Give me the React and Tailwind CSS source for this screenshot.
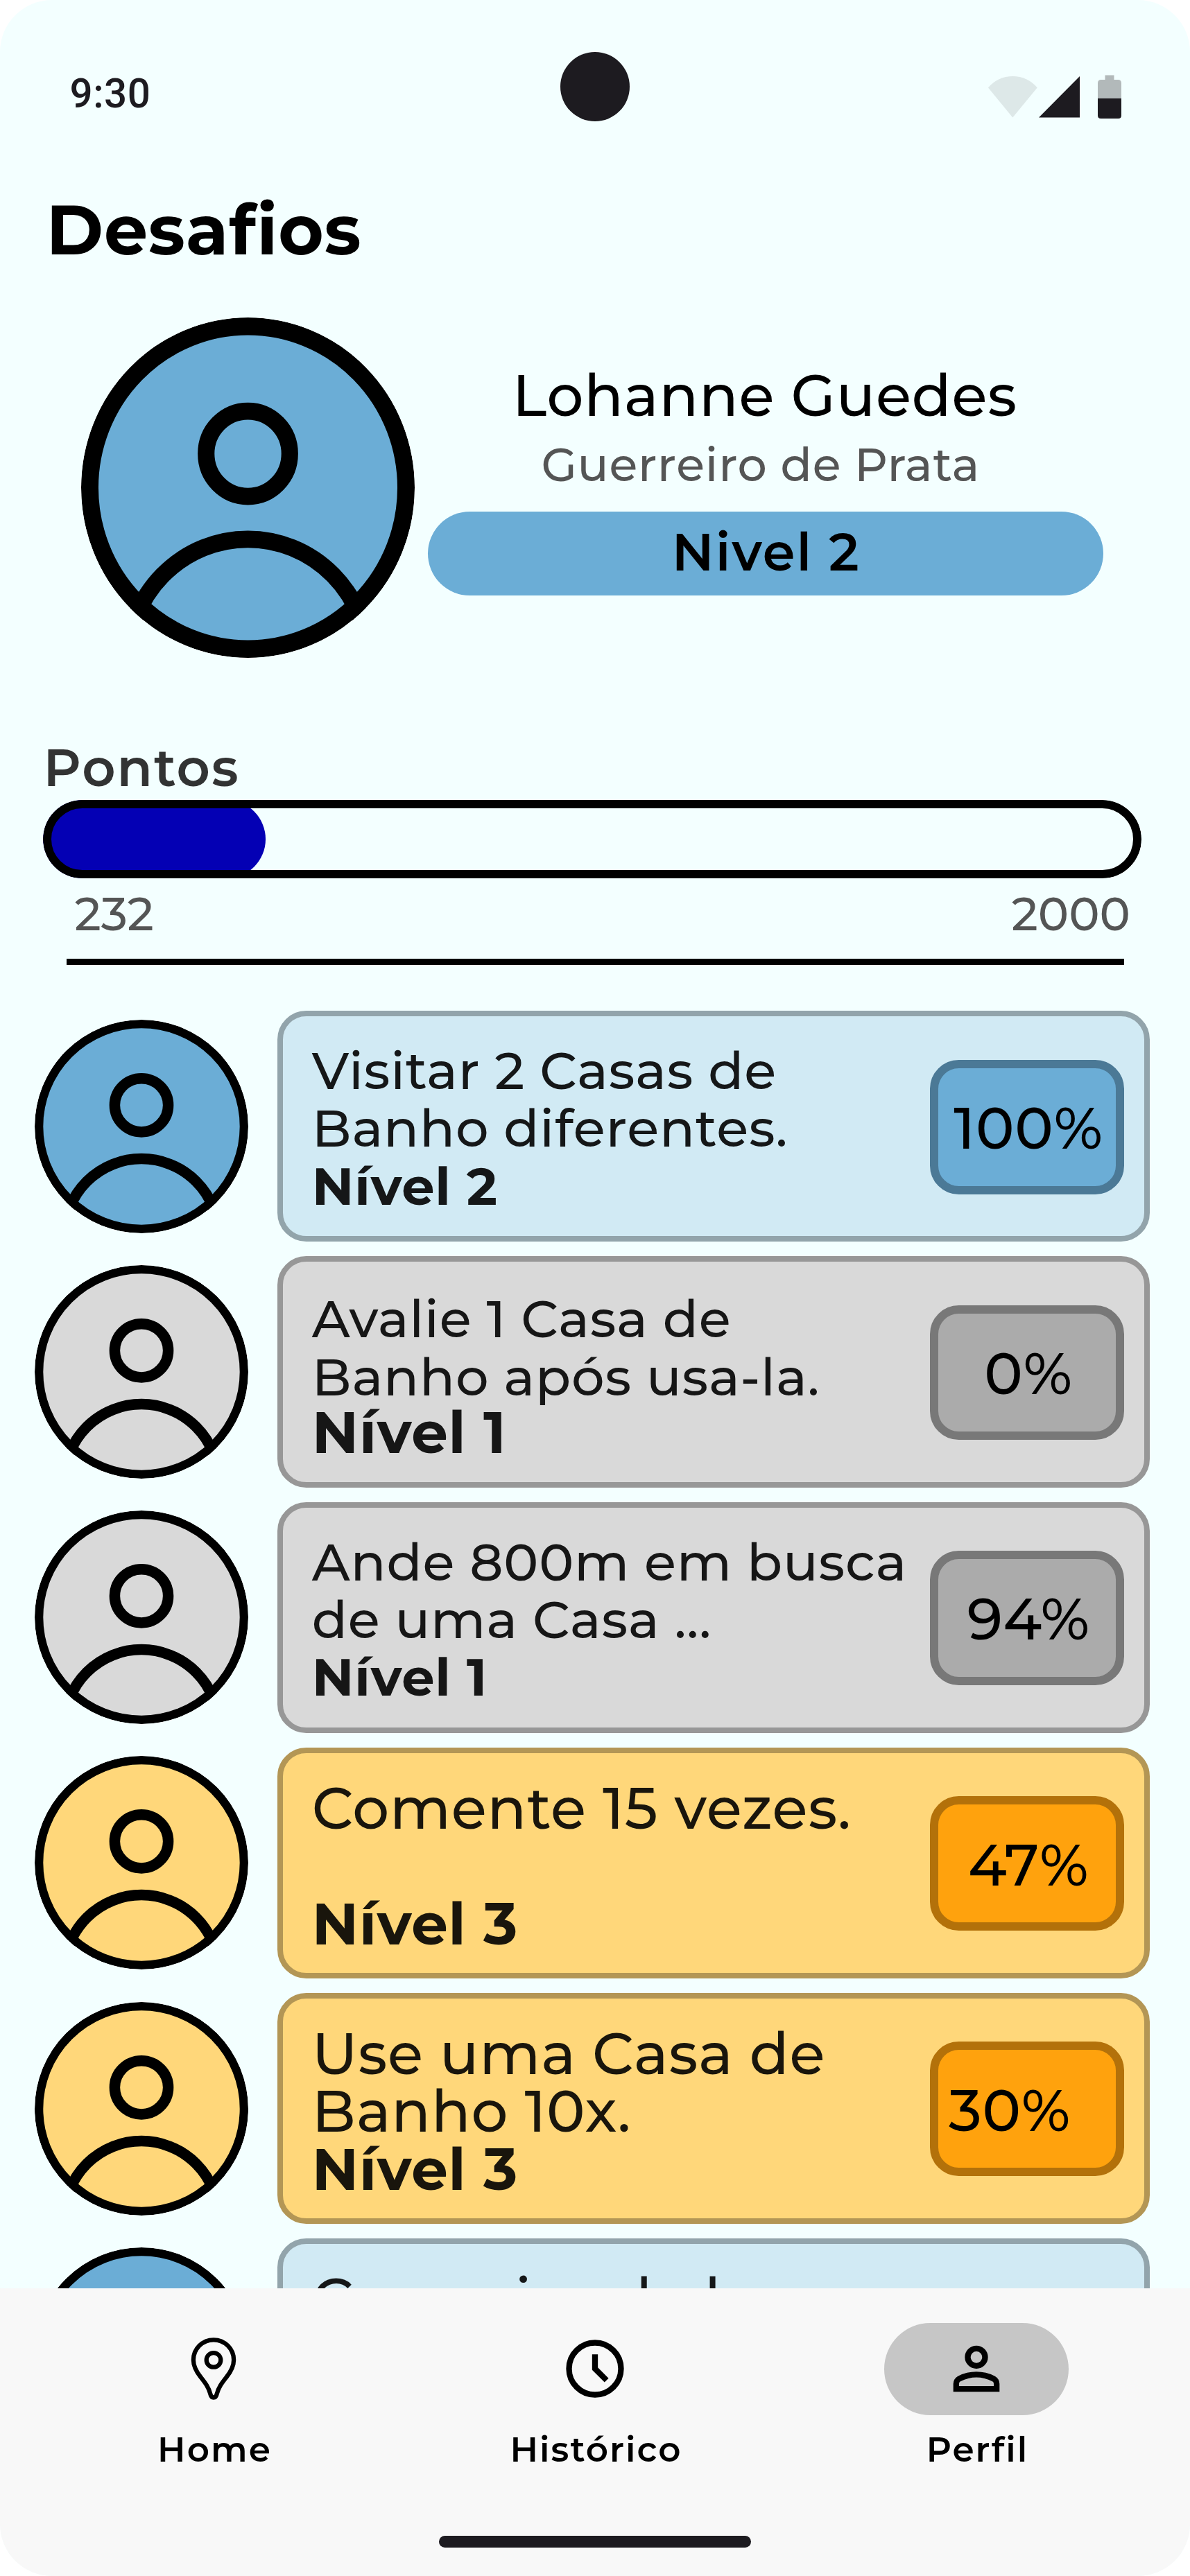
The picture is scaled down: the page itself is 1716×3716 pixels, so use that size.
import React from "react";

const THEMES = {
  blue: {
    avatar: "#6badd6",
    card: "bg-[#d1eaf4] border-[#92a4ab]",
    badge: "bg-[#6badd6] border-[#4b7996]",
  },
  gray: {
    avatar: "#d9d9d9",
    card: "bg-[#d9d9d9] border-[#979797]",
    badge: "bg-[#ababab] border-[#787878]",
  },
  gold: {
    avatar: "#ffd77a",
    card: "bg-[#ffd77a] border-[#b39655]",
    badge: "bg-[#ffa20d] border-[#b3710a]",
  },
};

const CHALLENGES = [
  {
    theme: "blue",
    lines: ["Visitar 2 Casas de", "Banho diferentes."],
    level: "Nível 2",
    percent: "100%",
    text: "pt-[37px] text-[75px]",
    levelClass: "text-[75px]",
  },
  {
    theme: "gray",
    lines: ["Avalie 1 Casa de", "Banho após usa-la."],
    level: "Nível 1",
    percent: "0%",
    text: "pt-[41px] text-[75px]",
    levelClass: "text-[83.3px] -mt-[3px]",
  },
  {
    theme: "gray",
    lines: ["Ande 800m em busca", "de uma Casa ..."],
    level: "Nível 1",
    percent: "94%",
    text: "pt-[37px] text-[75px]",
    levelClass: "text-[75px]",
  },
  {
    theme: "gold",
    lines: ["Comente 15 vezes.", "\u00a0"],
    level: "Nível 3",
    percent: "47%",
    text: "pt-[38.2px] text-[83.3px]",
    levelClass: "text-[83.3px]",
  },
  {
    theme: "gold",
    lines: ["Use uma Casa de", "Banho 10x."],
    level: "Nível 3",
    percent: "30%",
    text: "pt-[38.2px] text-[83.3px]",
    levelClass: "text-[83.3px]",
    badgeText: "pr-[50px]",
  },
  {
    theme: "blue",
    lines: ["Comprias de lavar"],
    text: "pt-[38.2px] text-[83.3px]",
  },
];

function Avatar({ id, fill, ring, className }) {
  return (
    <svg
      viewBox="0 0 308 308"
      preserveAspectRatio="none"
      className={`shrink-0 ${className}`}
      aria-hidden="true"
    >
      <clipPath id={id}>
        <circle cx="154" cy="154" r="154" />
      </clipPath>
      <g clipPath={`url(#${id})`}>
        <circle cx="154" cy="154" r="153" fill={fill} />
        <g fill="none" stroke="#000">
          <circle cx="154" cy="123.3" r="38.6" strokeWidth="15.5" />
          <circle cx="154" cy="312" r="111.4" strokeWidth="15.5" />
          <circle cx="154" cy="154" r={154 - ring / 2} strokeWidth={ring} />
        </g>
      </g>
    </svg>
  );
}

function StatusBar() {
  return (
    <div className="flex h-[175px] shrink-0 items-start pt-[75px]">
      <div className="w-[808px] pl-[100.5px] pt-[19.5px] font-['Roboto',sans-serif] text-[58.3px] font-medium leading-[80px] tracking-[0.5px] text-[#1d1b20]">
        9:30
      </div>
      <div className="size-[100px] rounded-full bg-[#1d1b20]" />
      <div className="flex w-[808px] justify-end pr-[96px] pt-[30px]">
        <svg width="200" height="70" viewBox="0 0 200 70" aria-hidden="true">
          <path d="M5 21.5A46 46 0 0 1 75.7 21.5L40.3 64.5Z" fill="#dde8e8" />
          <path d="M78 64.5L137 5V64.5Z" fill="#1d1b20" />
          <path
            d="M173.5 3.5H186.5V10H192Q197 10 197 15V37H163V15Q163 10 168 10H173.5Z"
            fill="#b2b9ba"
          />
          <path d="M163 37H197V61.5Q197 66 192.5 66H167.5Q163 66 163 61.5Z" fill="#1d1b20" />
        </svg>
      </div>
    </div>
  );
}

function Profile() {
  return (
    <section className="mt-[67px] flex h-[491px] shrink-0 pl-[116.5px]">
      <Avatar id="avatar-profile" fill="#6badd6" ring={16} className="h-[491px] w-[481px]" />
      <div className="ml-[19px] flex w-[974.6px] flex-col pt-[62px] text-center font-medium">
        <p className="pr-[2px] text-[83.3px] leading-[100px] tracking-[0.83px] text-black">
          Lohanne Guedes
        </p>
        <p className="mt-[8.6px] pr-[14px] text-[66.6px] leading-[83px] tracking-[0.83px] text-[#545555]">
          Guerreiro de Prata
        </p>
        <div className="mt-[26px] flex h-[121px] items-center justify-center rounded-full bg-[#6badd6] pb-[4px] pl-[2px] text-[75px] font-semibold tracking-[2.08px] text-black">
          Nivel 2
        </div>
      </div>
    </section>
  );
}

function Points() {
  return (
    <section className="mt-[113px] shrink-0">
      <h2 className="pl-[62.5px] text-[75px] font-semibold leading-[90px] tracking-[2.08px] text-[#323333]">
        Pontos
      </h2>
      <div className="relative ml-[62.4px] mt-[2px] h-[113px] w-[1584px] overflow-hidden rounded-full">
        <div className="h-full w-[320.6px] rounded-full bg-[#0400b4]" />
        <div className="absolute inset-0 rounded-full border-[12.5px] border-black" />
      </div>
      <div className="mt-[11.6px] flex justify-between pl-[107.5px] pr-[86px] text-[66.6px] font-medium leading-[80px] text-[#545555]">
        <span>232</span>
        <span>2000</span>
      </div>
      <div className="ml-[96.3px] mt-[24.6px] h-[8.6px] w-[1525px] bg-black" />
    </section>
  );
}

function Challenge({ item, index }) {
  const theme = THEMES[item.theme];
  return (
    <li className="flex h-[333.2px] shrink-0 pl-[50px]">
      <Avatar
        id={`avatar-${index}`}
        fill={theme.avatar}
        ring={12.3}
        className="mt-[12.6px] size-[308px]"
      />
      <div
        className={`ml-[42.3px] flex w-[1258px] items-start justify-between rounded-[41.6px] border-[8.3px] pl-[41.5px] pr-[29.5px] ${theme.card}`}
      >
        <div
          className={`whitespace-nowrap font-medium leading-[83.3px] tracking-[0.83px] text-black/90 ${item.text}`}
        >
          {item.lines.map((line, i) => (
            <p key={i}>{line}</p>
          ))}
          {item.level && <p className={`font-bold ${item.levelClass}`}>{item.level}</p>}
        </div>
        {item.percent && (
          <div
            className={`mt-[62.4px] flex h-[194px] w-[279.5px] shrink-0 items-center justify-center rounded-[41.6px] border-[12.5px] pt-[3px] text-[83.3px] font-medium leading-[100px] tracking-[0.83px] text-black ${theme.badge} ${item.badgeText || "pl-[4px]"}`}
          >
            {item.percent}
          </div>
        )}
      </div>
    </li>
  );
}

function PinIcon() {
  return (
    <svg width="100" height="100" viewBox="0 0 100 100" fill="none" stroke="#000" aria-hidden="true">
      <path
        d="M50 8.3C33.9 8.3 20.9 21.3 20.9 37.3C20.9 47 25 54 31 61.5C38 70.5 42.5 76 45.2 86C46 89.8 47.5 91.5 50 91.5C52.5 91.5 54 89.8 54.8 86C57.5 76 62 70.5 69 61.5C75 54 79.1 47 79.1 37.3C79.1 21.3 66.1 8.3 50 8.3Z"
        strokeWidth="6.3"
      />
      <circle cx="50" cy="37.4" r="10.3" strokeWidth="6.3" />
    </svg>
  );
}

function ClockIcon() {
  return (
    <svg width="100" height="100" viewBox="0 0 24 24" aria-hidden="true">
      <circle cx="12" cy="12" r="9" fill="none" stroke="#000" strokeWidth="2" />
      <path d="M11 7H13V11.6L16.7 15.3L15.3 16.7L11 12.4Z" />
    </svg>
  );
}

function PersonIcon() {
  return (
    <svg width="100" height="100" viewBox="0 0 24 24" aria-hidden="true">
      <circle cx="12" cy="8" r="3" fill="none" stroke="#000" strokeWidth="2" />
      <path
        fillRule="evenodd"
        d="M4 20v-2.8q0-.85.438-1.563T5.6 14.55q1.55-.775 3.15-1.163T12 13t3.25.388t3.15 1.162q.725.375 1.163 1.088T20 17.2V20zm2-2h12v-.8q0-.275-.137-.5t-.363-.35q-1.35-.675-2.725-1.012T12 15t-2.775.338T6.5 16.35q-.225.125-.363.35T6 17.2z"
      />
    </svg>
  );
}

function NavItem({ icon, label, active }) {
  return (
    <div className="flex flex-1 flex-col items-center">
      <div
        className={`flex h-[133.3px] w-[266.5px] items-center justify-center rounded-full ${active ? "bg-[#c6c6c6]" : ""}`}
      >
        {icon}
      </div>
      <span className="mt-[17px] pl-[3px] text-[50px] font-semibold leading-[66px] tracking-[2.08px] text-black">
        {label}
      </span>
    </div>
  );
}

function BottomNav() {
  return (
    <nav className="flex h-[415.5px] shrink-0 flex-col items-center bg-[#f8f8f8] pt-[50px]">
      <div className="flex w-[1650px]">
        <NavItem icon={<PinIcon />} label="Home" />
        <NavItem icon={<ClockIcon />} label="Histórico" />
        <NavItem icon={<PersonIcon />} label="Perfil" active />
      </div>
      <div className="mt-[91.7px] h-[16.6px] w-[450px] rounded-full bg-[#1d1b20]" />
    </nav>
  );
}

export default function App() {
  return (
    <div className="h-[3716px] w-[1716px] bg-white">
      <div className="flex h-full w-full flex-col overflow-hidden rounded-[75px] bg-[#f3ffff] font-['Montserrat','Inter',sans-serif]">
        <main className="flex min-h-0 flex-1 flex-col overflow-hidden">
          <StatusBar />
          <h1 className="mt-[96px] shrink-0 pl-[66.5px] text-[100px] font-bold leading-[120px] tracking-[0.83px] text-black">
            Desafios
          </h1>
          <Profile />
          <Points />
          <ul className="mt-[66.4px] flex shrink-0 flex-col gap-[21px]">
            {CHALLENGES.map((item, i) => (
              <Challenge key={i} item={item} index={i} />
            ))}
          </ul>
        </main>
        <BottomNav />
      </div>
    </div>
  );
}
